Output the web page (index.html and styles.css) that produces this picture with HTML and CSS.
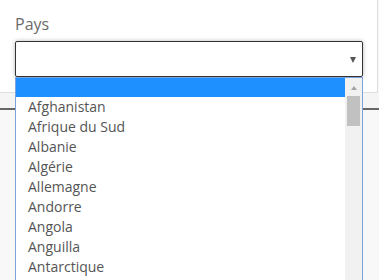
FILE: index.html
```html
<!DOCTYPE html>
<html lang="fr">
<head>
<meta charset="utf-8">
<link rel="stylesheet" href="styles.css">
</head>
<body>
<div class="card">
  <div class="label">Pays</div>
  <div class="field">
    <div class="select"><span class="caret"></span></div>
    <div class="dropdown">
      <div class="options">
        <div class="opt blank selected"></div>
        <div class="opt">Afghanistan</div>
        <div class="opt">Afrique du Sud</div>
        <div class="opt">Albanie</div>
        <div class="opt">Algérie</div>
        <div class="opt">Allemagne</div>
        <div class="opt">Andorre</div>
        <div class="opt">Angola</div>
        <div class="opt">Anguilla</div>
        <div class="opt">Antarctique</div>
      </div>
      <div class="scrollbar">
        <span class="up"></span>
        <span class="thumb"></span>
      </div>
    </div>
  </div>
</div>
<div class="bar"></div>
</body>
</html>
```
FILE: styles.css
```css
html, body {
  margin: 0;
  padding: 0;
}
body {
  background: #f8f8f8;
  font-family: "Open Sans", "DejaVu Sans", sans-serif;
  width: 379px;
  height: 280px;
  overflow: hidden;
}
.card {
  box-sizing: border-box;
  width: 379px;
  height: 94px;
  margin: -1px 0 0 -1px;
  padding: 13px 0 0 15px;
  background: #fff;
  border: 1px solid #dedede;
}
.label {
  font-size: 16px;
  line-height: 22px;
  color: #6b6b6b;
  margin-bottom: 6px;
}
.field {
  position: relative;
  width: 348px;
}
.select {
  box-sizing: border-box;
  height: 36px;
  border: 1px solid #333;
  border-radius: 2px;
  background: #fff;
  box-shadow: 0 0 4px rgba(0, 0, 0, 0.28);
  display: flex;
  align-items: center;
  justify-content: flex-end;
  padding-right: 6px;
}
.caret {
  width: 0;
  height: 0;
  border-left: 3px solid transparent;
  border-right: 3px solid transparent;
  border-top: 6px solid #555;
  margin-top: 1px;
}
.dropdown {
  position: absolute;
  left: 0;
  top: 36px;
  box-sizing: border-box;
  width: 348px;
  height: 215px;
  border: 1px solid #7ea2dc;
  background: #fff;
  display: flex;
  overflow: hidden;
  z-index: 2;
}
.options {
  flex: 1;
}
.opt {
  height: 20px;
  line-height: 20px;
  padding-left: 12px;
  font-size: 14px;
  color: #555;
  white-space: nowrap;
}
.opt.blank {
  height: 19px;
}
.opt.selected {
  background: #1e90ff;
}
.scrollbar {
  width: 17px;
  background: #f1f1f1;
  display: flex;
  flex-direction: column;
  align-items: center;
}
.up {
  width: 0;
  height: 0;
  border-left: 3.5px solid transparent;
  border-right: 3.5px solid transparent;
  border-bottom: 4px solid #a3a3a3;
  margin-top: 8px;
}
.thumb {
  width: 13px;
  height: 30px;
  background: #c1c1c1;
  margin-top: 6px;
}
.bar {
  height: 15px;
  background: #f5f5f5;
  border-bottom: 2px solid #666;
}
```
